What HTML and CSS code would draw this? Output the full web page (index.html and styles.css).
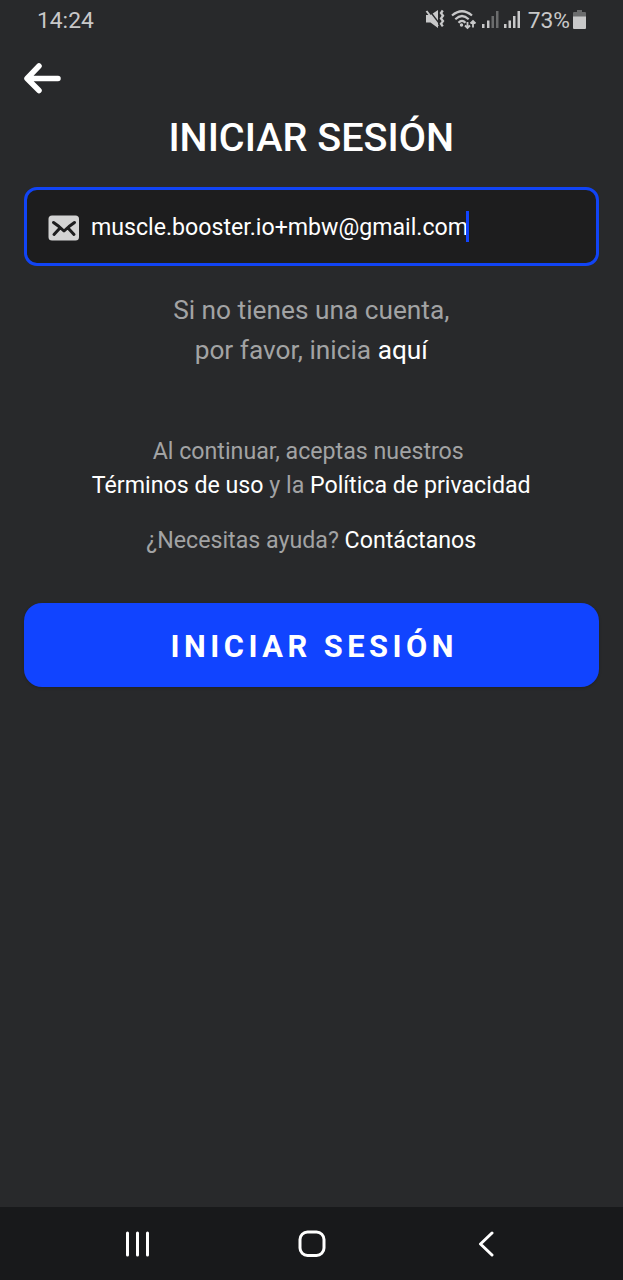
FILE: index.html
```html
<!DOCTYPE html>
<html lang="es">
<head>
    <meta charset="UTF-8">
    <meta name="viewport" content="width=device-width, initial-scale=1.0">
    <title>Iniciar sesión</title>
    <link rel="stylesheet" href="styles.css">
</head>
<body>
    <div class="status-bar">
        <span class="time">14:24</span>
        <div class="status-icons">
            <svg class="icon-mute" width="20" height="20" viewBox="0 0 20 20">
                <path d="M1 6h4.500L13 1v18l-7.500-5.500H1z" fill="#c8c8c9"/>
                <path d="M4 1l10 13" stroke="#28292b" stroke-width="1.300"/>
                <path d="M1.500 2l11.500 15" stroke="#c8c8c9" stroke-width="2"/>
                <path d="M17.800 1.500L16 4l2 2.700-2 2.700 2 2.700-2 2.700 1.800 2.500" fill="none" stroke="#c8c8c9" stroke-width="2.300"/>
            </svg>
            <svg class="icon-wifi" width="26" height="20" viewBox="0 0 26 20">
                <g fill="none" stroke="#c8c8c9" stroke-width="2.200">
                    <path d="M1 5.500Q11 -3 21 5.500"/>
                    <path d="M4.300 9.200Q11 2.800 17.700 9.200"/>
                    <path d="M7.500 12.700Q11 9 14.500 12.700"/>
                </g>
                <circle cx="10.500" cy="15" r="1.700" fill="#c8c8c9"/>
                <path d="M16.500 12v6M14 15.500l2.500 2.500 2.500-2.500M22 17.500V11M19.500 13.500l2.500-2.500 2.500 2.500" fill="none" stroke="#c8c8c9" stroke-width="1.800"/>
            </svg>
            <svg class="icon-signal" width="17" height="18" viewBox="0 0 17 18">
                <path d="M0 14h2.500v4H0zM5 10.500h2.500V18H5z" fill="#c8c8c9"/>
                <path d="M9.500 6H12v12H9.500zM14 1h2.500v17H14z" fill="#6b6c6d"/>
            </svg>
            <svg class="icon-signal" width="17" height="18" viewBox="0 0 17 18">
                <path d="M0 14h2.500v4H0zM4.500 10.500H7V18H4.500zM9 6h2.500v12H9zM13.500 1H16v17h-2.500z" fill="#c8c8c9"/>
            </svg>
            <span class="battery-level">73%</span>
            <svg class="icon-battery" width="13" height="19" viewBox="0 0 13 19">
                <path d="M4 0h5v2h3a1 1 0 0 1 1 1v4H0V3a1 1 0 0 1 1-1h3z" fill="#6b6c6d"/>
                <path d="M0 6.500h13V18a1 1 0 0 1-1 1H1a1 1 0 0 1-1-1z" fill="#c8c8c9"/>
            </svg>
        </div>
    </div>

    <main class="login">
        <a class="back" href="#">
            <svg width="38" height="32" viewBox="0 0 38 32">
                <path d="M15 4L3 16.500l12 12M4 16.500h30" fill="none" stroke="#fff" stroke-width="5.500" stroke-linecap="round" stroke-linejoin="round"/>
            </svg>
        </a>
        <h1>INICIAR SESIÓN</h1>

        <div class="email-field">
            <svg width="32" height="26" viewBox="0 0 32 26">
                <rect x="0.500" y="0.500" width="30.500" height="25" rx="3.500" fill="#d3d3d3"/>
                <path d="M5.500 7.500l5.500 4 5 4.500 5-4.500 5.500-4M6 19.500l6-6.500M26 19.500L20 13" fill="none" stroke="#1d1d1e" stroke-width="3" stroke-linecap="round" stroke-linejoin="round"/>
            </svg>
            <span class="email">muscle.booster.io+mbw@gmail.com</span>
            <span class="caret"></span>
        </div>

        <p class="signup">Si no tienes una cuenta,<br>por favor, inicia <a href="#">aquí</a></p>
        <p class="terms"><span class="terms-intro">Al continuar, aceptas nuestros</span><br><a href="#">Términos de uso</a> y la <a href="#">Política de privacidad</a></p>
        <p class="help">¿Necesitas ayuda? <a href="#">Contáctanos</a></p>

        <button class="submit">INICIAR SESIÓN</button>
    </main>

    <nav class="nav-bar">
        <svg width="26" height="26" viewBox="0 0 26 26">
            <path d="M2.500 2v22M12.500 2v22M22.500 2v22" stroke="#fff" stroke-width="3" stroke-linecap="round"/>
        </svg>
        <svg class="icon-home" width="28" height="28" viewBox="0 0 28 28">
            <rect x="2" y="2" width="24" height="23.500" rx="7.500" fill="none" stroke="#fff" stroke-width="3"/>
        </svg>
        <svg width="16" height="26" viewBox="0 0 16 26">
            <path d="M14 2L2.500 13 14 24" fill="none" stroke="#fff" stroke-width="3" stroke-linecap="round" stroke-linejoin="round"/>
        </svg>
    </nav>
</body>
</html>
```
FILE: styles.css
```css
* {
    box-sizing: border-box;
}

body {
    font-family: Roboto, sans-serif;
    display: flex;
    flex-direction: column;
    height: 100vh;
    margin: 0;
    background-color: #28292b;
    color: #a2a3a4;
}

svg {
    display: block;
    flex: none;
}

a {
    color: #fff;
    text-decoration: none;
}

.status-bar {
    display: flex;
    justify-content: space-between;
    align-items: center;
    height: 40px;
    padding: 0 37px;
    font-size: 22.8px;
    color: #c8c8c9;
}

.status-icons {
    display: flex;
    align-items: center;
}

.icon-mute {
    margin-top: -2px;
}

.icon-wifi {
    margin-left: 6px;
}

.icon-signal {
    margin-left: 5px;
    margin-top: -2px;
}

.battery-level {
    margin-left: 7px;
}

.icon-battery {
    margin-left: 3px;
    margin-top: -2px;
}

.login {
    display: flex;
    flex-direction: column;
    flex: 1;
    padding: 22px 24.5px 0 24px;
}

.back {
    align-self: flex-start;
}

h1 {
    margin: 20px 0 25px;
    font-size: 39.6px;
    font-weight: 500;
    line-height: 48px;
    text-align: center;
    color: #fff;
}

.email-field {
    display: flex;
    align-items: center;
    height: 79px;
    padding: 2px 0 0 21px;
    border: 3px solid #1144f5;
    border-radius: 13px;
    background-color: #1d1d1e;
}

.email {
    margin-left: 11px;
    font-size: 23.15px;
    color: #fff;
}

.caret {
    width: 3px;
    height: 31px;
    margin: -2px 0 0 -2.5px;
    background-color: #1144ff;
}

p {
    margin: 0;
    text-align: center;
}

.signup {
    margin-top: 24px;
    font-size: 26.25px;
    line-height: 40px;
}

.terms {
    margin-top: 65px;
    font-size: 23.2px;
    line-height: 33.5px;
}

.terms-intro {
    margin-right: 6px;
}

.help {
    margin-top: 22px;
    font-size: 23.2px;
    line-height: 33px;
}

.submit {
    height: 84px;
    margin-top: 45.5px;
    padding: 3px 0 0 6px;
    border: none;
    border-radius: 18px;
    background-color: #1144ff;
    color: #fff;
    font-family: inherit;
    font-size: 30.8px;
    font-weight: 700;
    letter-spacing: 4.5px;
    box-shadow: 0 1px 3px rgba(0, 0, 0, 0.2);
}

.nav-bar {
    display: flex;
    justify-content: space-between;
    align-items: center;
    height: 73px;
    padding: 0 129px 0 125px;
    background-color: #18191b;
}

.icon-home {
    margin-right: 6px;
}
```
